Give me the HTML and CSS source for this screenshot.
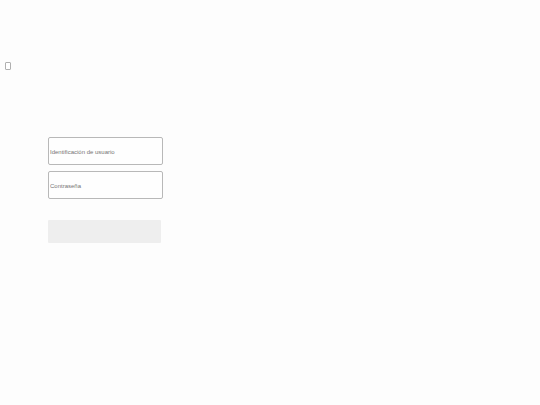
FILE: index.html
```
<!DOCTYPE html>
<html lang="es">
<head>
  <meta charset="UTF-8">
  <meta name="viewport" content="width=device-width, initial-scale=1.0">
  <title>Acceso</title>
  <link rel="stylesheet" href="styles.css">
</head>
<body>
  <form class="login">
    <input class="login-check" type="checkbox" name="remember" aria-label="Recordar usuario">

    <div class="login-fields">
      <input class="field" type="text" name="user" placeholder="Identificación de usuario" aria-label="Identificación de usuario">
      <input class="field" type="password" name="password" placeholder="Contraseña" aria-label="Contraseña">
      <button class="login-submit" type="submit" aria-label="Entrar"></button>
    </div>
  </form>
</body>
</html>
```

FILE: styles.css
```
body {
  font-family: "Liberation Sans", Arial, sans-serif;
  font-size: 6px;
  background-color: #fdfdfd;
  margin: 0;
}

.login {
  display: flex;
  flex-direction: column;
  padding: 62px 5px 0;
}

.login-check {
  appearance: none;
  box-sizing: border-box;
  width: 6px;
  height: 8px;
  margin: 0;
  border: 1px solid #b0b0b0;
  border-radius: 1px;
  background-color: #fff;
}

.login-fields {
  display: flex;
  flex-direction: column;
  gap: 6px;
  box-sizing: border-box;
  width: 100%;
  max-width: 158px;
  margin-top: 67px;
  padding-left: 43px;
}

.field {
  box-sizing: border-box;
  width: 100%;
  margin: 0;
  padding: 10px 1px 8px;
  border: 1px solid #b8b8b8;
  border-radius: 2px;
  background-color: #fefefe;
  color: #333;
  font: inherit;
  line-height: 8px;
}

.field::placeholder {
  color: #757575;
}

.login-submit {
  height: 23px;
  margin: 15px 2px 0 0;
  border: none;
  border-radius: 1px;
  background-color: #eee;
  font: inherit;
}
```
